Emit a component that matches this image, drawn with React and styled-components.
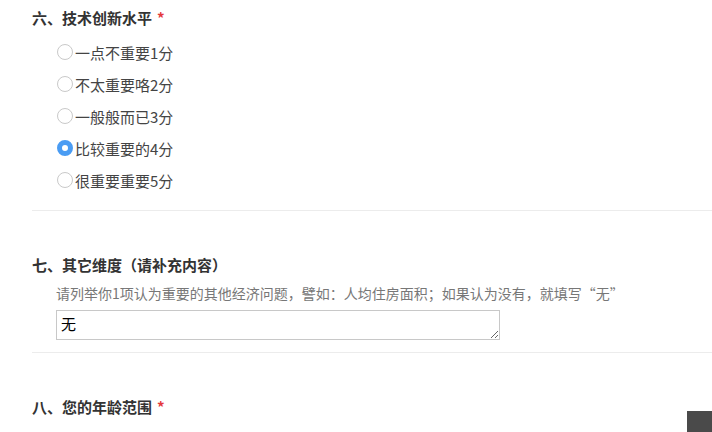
import styled, { createGlobalStyle } from "styled-components";

const GlobalStyle = createGlobalStyle`
  body {
    margin: 0;
    background: #fff;
    font-family: "Noto Sans CJK SC", "Noto Sans", sans-serif;
    color: #333;
  }
`;

const options = [
  { label: "一点不重要1分" },
  { label: "不太重要咯2分" },
  { label: "一般般而已3分" },
  { label: "比较重要的4分", checked: true },
  { label: "很重要重要5分" },
];

function App() {
  return (
    <Page>
      <GlobalStyle />
      <Section $top={8}>
        <Title>
          六、技术创新水平<Required>*</Required>
        </Title>
        <OptionList>
          {options.map((o) => (
            <Option key={o.label}>
              <Radio $checked={o.checked} />
              {o.label}
            </Option>
          ))}
        </OptionList>
      </Section>
      <Section>
        <Title>七、其它维度（请补充内容）</Title>
        <Body>
          <Hint>
            请列举你1项认为重要的其他经济问题，譬如：人均住房面积；如果认为没有，就填写“无”
          </Hint>
          <Answer defaultValue="无" />
        </Body>
      </Section>
      <Section $last>
        <Title>
          八、您的年龄范围<Required>*</Required>
        </Title>
      </Section>
      <TopButton />
    </Page>
  );
}

const Page = styled.div`
  padding-left: 32px;
  overflow: hidden;
  height: 432px;
`;

const Section = styled.div`
  padding: ${({ $top }) => ($top ?? 44) + "px"} 0 12px;
  border-bottom: ${({ $last }) => ($last ? "none" : "1px solid #ececec")};
`;

const Title = styled.div`
  font-size: 15px;
  font-weight: 700;
  line-height: 20px;
  color: #333;
`;

const Required = styled.span`
  color: #e4393c;
  margin-left: 5px;
`;

const OptionList = styled.div`
  display: flex;
  flex-direction: column;
  padding: 8px 0 2px 25px;
`;

const Option = styled.label`
  display: flex;
  align-items: center;
  gap: 2px;
  height: 32px;
  font-size: 15px;
  color: #444;
`;

const Radio = styled.span`
  flex-shrink: 0;
  box-sizing: border-box;
  width: 16px;
  height: 16px;
  border-radius: 50%;
  border: ${({ $checked }) => ($checked ? "5px solid #4a9cf3" : "1px solid #c9c9c9")};
  background: #fff;
`;

const Body = styled.div`
  padding-left: 24px;
`;

const Hint = styled.div`
  margin-top: 9px;
  font-size: 14px;
  line-height: 18px;
  color: #777;
`;

const Answer = styled.textarea`
  display: block;
  box-sizing: border-box;
  margin-top: 8px;
  width: 444px;
  height: 30px;
  padding: 3px 4px;
  border: 1px solid #c8c8c8;
  font-family: "Noto Sans CJK SC", sans-serif;
  font-size: 15px;
  line-height: 20px;
  color: #000;
  resize: vertical;
`;

const TopButton = styled.div`
  position: fixed;
  right: -15px;
  bottom: -19px;
  width: 40px;
  height: 40px;
  background: #4a4a4a;
`;

export default App;
